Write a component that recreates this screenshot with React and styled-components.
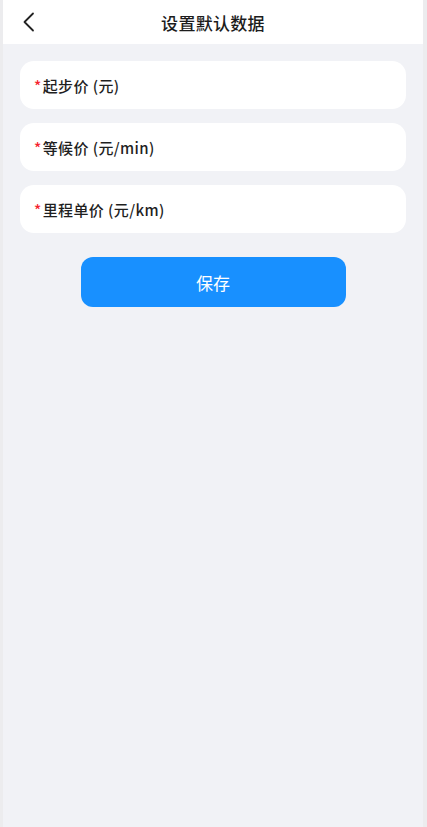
import React from "react";
import styled, { createGlobalStyle } from "styled-components";

const Global = createGlobalStyle`
  html, body { margin: 0; padding: 0; background: #ececee; }
  body { font-family: "Noto Sans CJK SC", "Noto Sans", sans-serif; }
  #root { min-height: 100vh; }
`;

const Frame = styled.div`
  margin: 0 4px 0 3px;
  min-height: 827px;
  background: #f1f2f6;
  display: flex;
  flex-direction: column;
`;

const Header = styled.header`
  height: 44px;
  background: #fff;
  position: relative;
  display: flex;
  align-items: center;
  justify-content: center;
`;

const Back = styled.button`
  position: absolute;
  left: 14px;
  top: 10px;
  width: 24px;
  height: 24px;
  padding: 0;
  border: none;
  background: none;
  display: flex;
  align-items: center;
  justify-content: center;
`;

const Title = styled.h1`
  margin: 0;
  font-size: 17px;
  font-weight: 500;
  color: #1c1c1c;
  letter-spacing: 0.3px;
`;

const Form = styled.div`
  display: flex;
  flex-direction: column;
  gap: 14px;
  padding: 17px 17px 0 17px;
`;

const Field = styled.div`
  height: 48px;
  background: #fff;
  border-radius: 14px;
  display: flex;
  align-items: center;
  padding: 0 14px;
`;

const Label = styled.span`
  font-size: 15px;
  font-weight: 500;
  color: #1f1f1f;
  letter-spacing: 0.4px;
`;

const Star = styled.span`
  color: #f5222d;
  margin-right: 1px;
`;

const Save = styled.button`
  align-self: center;
  margin-top: 24px;
  width: 265px;
  height: 50px;
  border: none;
  border-radius: 12px;
  background: #1890ff;
  color: #fff;
  font-family: inherit;
  font-size: 17px;
  font-weight: 400;
`;

const fields = ["起步价 (元)", "等候价 (元/min)", "里程单价 (元/km)"];

export default function App() {
  return (
    <>
      <Global />
      <Frame>
        <Header>
          <Back aria-label="back">
            <svg width="14" height="20" viewBox="0 0 14 20" fill="none">
              <path d="M11 1.5 L2.5 10 L11 18.5" stroke="#222" strokeWidth="1.8" strokeLinecap="round" strokeLinejoin="round" />
            </svg>
          </Back>
          <Title>设置默认数据</Title>
        </Header>
        <Form>
          {fields.map((f) => (
            <Field key={f}>
              <Label>
                <Star>*</Star>
                {f}
              </Label>
            </Field>
          ))}
        </Form>
        <Save>保存</Save>
      </Frame>
    </>
  );
}
